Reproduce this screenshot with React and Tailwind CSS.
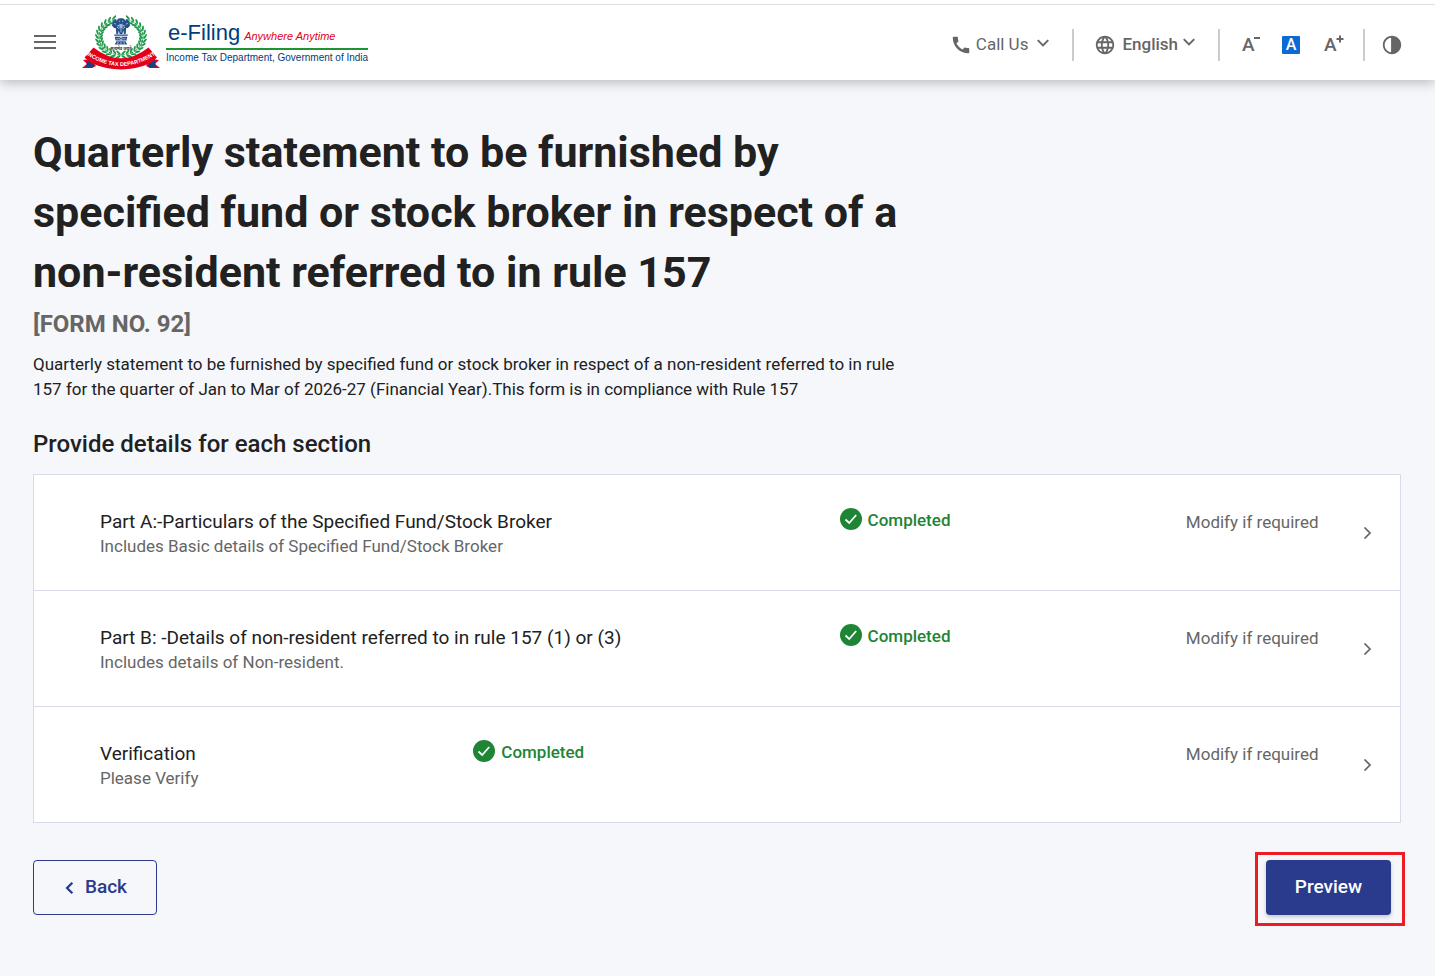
import { MdCall, MdContrast, MdLanguage } from 'react-icons/md';

const sections = [
  {
    title: 'Part A:-Particulars of the Specified Fund/Stock Broker',
    subtitle: 'Includes Basic details of Specified Fund/Stock Broker',
    columns: 'grid-cols-[739fr_346fr_187fr]',
  },
  {
    title: 'Part B: -Details of non-resident referred to in rule 157 (1) or (3)',
    subtitle: 'Includes details of Non-resident.',
    columns: 'grid-cols-[739fr_346fr_187fr]',
  },
  {
    title: 'Verification',
    subtitle: 'Please Verify',
    columns: 'grid-cols-[373fr_712fr_187fr]',
  },
];

// One half of the wreath, mirrored for the other side
const leaves = Array.from({ length: 14 }, (_, i) => {
  const angle = 98 + i * 12;
  const rad = (angle * Math.PI) / 180;
  return { angle, x: 39 + 22 * Math.cos(rad), y: 22 + 18 * Math.sin(rad) };
});

const WreathHalf = () => (
  <g>
    {leaves.map((leaf) => (
      <g key={leaf.angle} transform={`translate(${leaf.x} ${leaf.y}) rotate(${leaf.angle + 90})`}>
        <ellipse cx="1" cy="-2" rx="2.8" ry="1" transform="rotate(-32)" />
        <ellipse cx="1" cy="2" rx="2.8" ry="1" transform="rotate(32)" />
        <ellipse cx="-1" cy="0" rx="2" ry="0.6" />
      </g>
    ))}
  </g>
);

const Emblem = () => (
  <svg viewBox="0 0 78 56" className="h-14 w-[78px]" aria-hidden="true">
    <g fill="#1f9a4c">
      <WreathHalf />
      <g transform="translate(78 0) scale(-1 1)">
        <WreathHalf />
      </g>
    </g>
    {/* lion capital */}
    <g transform="translate(3.9 1) scale(0.9 0.86)">
      <g fill="#24508c">
        <path d="M35 4c1-2 7-2 8 0l1.500 3-1 4h-9l-1-4z" />
        <path d="M34 4.500c-2-1-3 0-3.500 1.500l-1.500.8.8 1.700-1 2.500 2.500 3h4z" />
        <path d="M44 4.500c2-1 3 0 3.500 1.500l1.500.8-.8 1.700 1 2.500-2.500 3h-4z" />
        <path d="M33 12h12l-.8 9h-2l-.7-4-1 4h-3l-1-4-.7 4h-2z" />
        <path d="M31.500 21.500h15v1.500h-15z" />
        <path d="M32 24h14l-1 4.500H33z" />
        <path d="M34 29.500h10l2 3.500H32z" />
      </g>
      <g stroke="#fff" strokeWidth="0.7" fill="none">
        <path d="M36.500 6h1.500M40 6h1.500M37 9.500q2 1.500 4 0M31.500 8.500l2 1M46.500 8.500l-2 1M34.500 12.500l2 2 2.500-2 2.500 2 2-2M39 11v8" />
        <circle cx="39" cy="26.300" r="1.500" />
        <path d="M34 26.500h2.500M41.500 26.500H44M36 30l-1 3M39 30v3M42 30l1 3" />
      </g>
    </g>
    <text x="39" y="35" textAnchor="middle" fontSize="4" fontWeight="700" fill="#333" fontFamily="Noto Sans, sans-serif">
      सत्यमेव जयते
    </text>
    {/* ribbon */}
    <path d="M9 44L1 45l4 4-5 4h10l4-2z" fill="#e2001a" />
    <path d="M69 44l8 1-4 4 5 4H68l-4-2z" fill="#e2001a" />
    <path d="M5.500 44.500l7 6-2.500 2.500-6-1z" fill="#1d3f85" />
    <path d="M72.500 44.500l-7 6 2.500 2.500 6-1z" fill="#1d3f85" />
    <path d="M11.500 32.500Q39 54 66.500 32.500L75 42.500 69 48Q39 61 9 48L2.500 42.500z" fill="#e2001a" />
    <path id="ribbon-line" d="M5 40Q39 62 73 40" fill="none" />
    <text fontSize="5.500" fontWeight="700" fill="#fff" textAnchor="middle" fontFamily="Liberation Sans, sans-serif">
      <textPath href="#ribbon-line" startOffset="50%">INCOME TAX DEPARTMENT</textPath>
    </text>
  </svg>
);

const Chevron = ({ direction, className }) => {
  const paths = {
    down: 'M1.500 3.500L6 8l4.500-4.500',
    left: 'M8 1.500L3.500 6 8 10.500',
    right: 'M3.500 0.500L9 6l-5.500 5.500',
  };
  return (
    <svg viewBox="0 0 12 12" className={className} fill="none" stroke="currentColor" aria-hidden="true">
      <path d={paths[direction]} />
    </svg>
  );
};

const Divider = () => <span className="h-8 w-0.5 bg-[#ccc]" />;

const Header = () => (
  <header className="relative bg-white pt-1 shadow-[0_2px_12px_rgba(0,0,0,0.28)]">
    <div className="flex h-[76px] items-center justify-between border-t border-[#dedede] pr-8 pl-[34px]">
      <div className="flex items-center">
        <button type="button" aria-label="Menu" className="mr-[26px] mb-0.5 text-[#666]">
          <svg viewBox="0 0 22 16" className="h-4 w-[22px]" stroke="currentColor" strokeWidth="2">
            <path d="M0 2h22M0 8h22M0 14h22" />
          </svg>
        </button>
        <a href="#home" className="flex items-center">
          <Emblem />
          <span className="ml-1.5 flex flex-col font-['Liberation_Sans',sans-serif] text-[#003d7c]">
            <span className="flex items-baseline gap-1 border-b-2 border-[#1f9235] pt-0.5 pl-0.5 leading-6">
              <span className="text-[22px]">e-Filing</span>
              <span className="text-[11px] text-[#e2001a] italic">Anywhere Anytime</span>
            </span>
            <span className="text-[10px] leading-4 whitespace-nowrap">Income Tax Department, Government of India</span>
          </span>
        </a>
      </div>

      <div className="flex items-center pt-1 text-[#666]">
        <button type="button" className="flex items-center text-[17px]">
          <MdCall className="mr-1 size-[22px]" />
          Call Us
          <Chevron direction="down" className="mb-1 ml-2 size-3.5 stroke-[1.7]" />
        </button>
        <span className="w-[22px]" />
        <Divider />
        <button type="button" className="ml-5 flex items-center text-[17px] font-medium">
          <MdLanguage className="mr-1.5 size-[22px]" />
          English
          <Chevron direction="down" className="mb-1.5 ml-1 size-3.5 stroke-[1.7]" />
        </button>
        <span className="w-[22px]" />
        <Divider />
        <button type="button" aria-label="Decrease text size" className="ml-[22px] flex w-[18px] text-[19px] leading-5 font-medium">
          A
          <svg viewBox="0 0 6 6" className="-ml-px size-1.5 shrink-0" stroke="currentColor" strokeWidth="2">
            <path d="M0 3h6" />
          </svg>
        </button>
        <button type="button" aria-label="Default text size" className="ml-[22px] size-[18px] rounded-[1px] bg-[#0b6bd3] text-center text-base leading-[18px] font-medium text-white">
          A
        </button>
        <button type="button" aria-label="Increase text size" className="ml-6 flex w-[19px] text-[19px] leading-5 font-medium">
          A
          <svg viewBox="0 0 8 8" className="-ml-px size-2 shrink-0" stroke="currentColor" strokeWidth="2">
            <path d="M0.500 4h7M4 0.500v7" />
          </svg>
        </button>
        <span className="w-5" />
        <Divider />
        <button type="button" aria-label="Toggle contrast" className="ml-4">
          <MdContrast className="size-[22px] -scale-x-100" />
        </button>
      </div>
    </div>
  </header>
);

const Completed = () => (
  <span className="flex items-start gap-1.5 text-[17px] leading-6 font-medium text-[#1e8535]">
    <svg viewBox="0 0 22 22" className="size-[22px]" aria-hidden="true">
      <circle cx="11" cy="11" r="11" fill="#1e8535" />
      <path d="M5.500 11.500l3.700 3.500 7-8" fill="none" stroke="#fff" strokeWidth="1.800" />
    </svg>
    Completed
  </span>
);

const SectionRow = ({ section }) => (
  <li className="border-b border-[#d8d9ea] last:border-b-0">
    <button type="button" className={`grid h-[115px] w-full ${section.columns} pr-[27px] pl-[66px] text-left`}>
      <span className="flex flex-col pt-[34px]">
        <span className="text-[19px] leading-[25px] text-[#212121]">{section.title}</span>
        <span className="text-[17px] leading-[25px] text-[#666]">{section.subtitle}</span>
      </span>
      <span className="pt-[33px]">
        <Completed />
      </span>
      <span className="flex h-full justify-between text-[#666]">
        <span className="pt-[35px] text-[17px] leading-6 whitespace-nowrap">Modify if required</span>
        <Chevron direction="right" className="size-3 shrink-0 self-center stroke-[1.7]" />
      </span>
    </button>
  </li>
);

const App = () => {
  return (
    <div className="min-h-screen bg-[#f5f7fb] font-['Roboto',sans-serif] text-[#212121]">
      <Header />
      <main className="pt-[42px] pr-[34px] pb-[50px] pl-[33px]">
        <h1 className="max-w-[890px] text-[43px] leading-[60px] font-bold">
          Quarterly statement to be furnished by specified fund or stock broker in respect of a non-resident referred to in rule 157
        </h1>
        <p className="mt-1 text-2xl leading-9 font-bold text-[#666]">[FORM NO. 92]</p>
        <p className="mt-[10px] max-w-[890px] text-[17px] leading-[25px]">
          Quarterly statement to be furnished by specified fund or stock broker in respect of a non-resident referred to in rule 157 for the quarter of Jan to Mar of 2026-27 (Financial Year).This form is in compliance with Rule 157
        </p>
        <h2 className="mt-6 text-2xl leading-9 font-medium">Provide details for each section</h2>

        <ul className="mt-3 border border-[#d8d9ea] bg-white">
          {sections.map((section) => (
            <SectionRow key={section.title} section={section} />
          ))}
        </ul>

        <div className="mt-[29px] -mr-1 flex items-start justify-between">
          <button type="button" className="mt-2 flex h-[55px] w-[124px] items-center justify-center gap-2 rounded border border-[#2a3a8c] text-[19px] font-medium text-[#2a3a8c]">
            <Chevron direction="left" className="size-3.5 stroke-2" />
            Back
          </button>
          <div className="border-3 border-[#ed1c24] pt-[5px] pr-[11px] pb-2 pl-2">
            <button type="button" className="h-[55px] w-[125px] rounded bg-[#2a3a8c] text-[19px] font-medium text-white shadow-[0_2px_4px_rgba(0,0,0,0.2)]">
              Preview
            </button>
          </div>
        </div>
      </main>
    </div>
  );
};

export default App;
